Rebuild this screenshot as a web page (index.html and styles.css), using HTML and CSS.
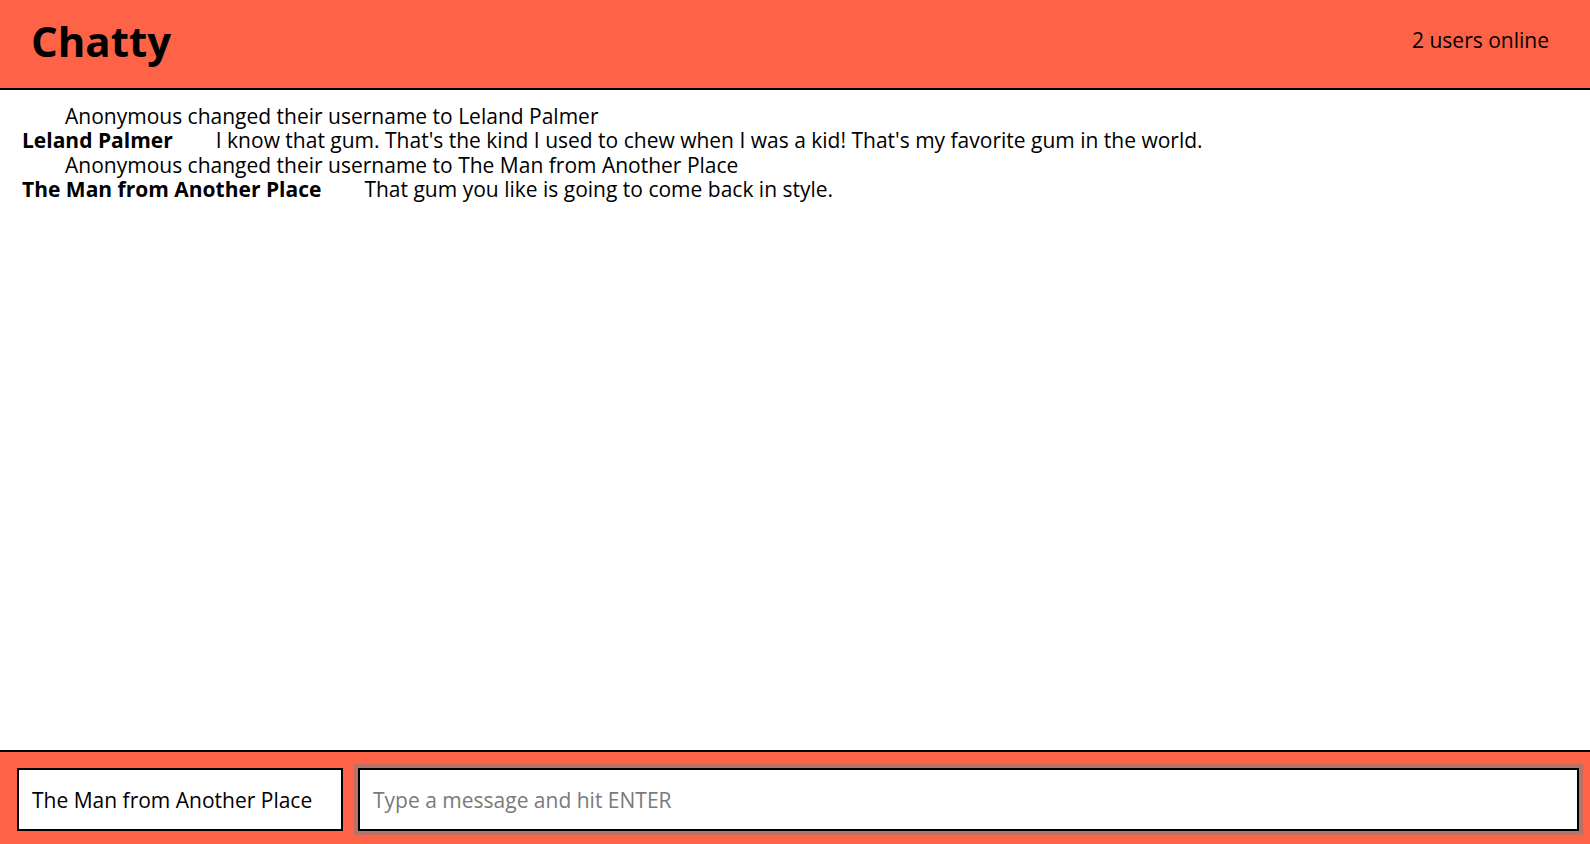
FILE: index.html
```html
<!DOCTYPE html>
<html>
<head>
<meta charset="utf-8">
<title>Chatty</title>
<link rel="stylesheet" href="styles.css">
</head>
<body>
<div class="app">
  <header class="navbar">
    <h1 class="brand">Chatty</h1>
    <span class="online">2 users online</span>
  </header>
  <main class="messages">
    <div class="message system"><span class="username"></span><span class="content">Anonymous changed their username to Leland Palmer</span></div>
    <div class="message"><span class="username">Leland Palmer</span><span class="content">I know that gum. That's the kind I used to chew when I was a kid! That's my favorite gum in the world.</span></div>
    <div class="message system"><span class="username"></span><span class="content">Anonymous changed their username to The Man from Another Place</span></div>
    <div class="message"><span class="username">The Man from Another Place</span><span class="content">That gum you like is going to come back in style.</span></div>
  </main>
  <footer class="chatbar">
    <input class="chatbar-username" type="text" value="The Man from Another Place">
    <input class="chatbar-message" type="text" placeholder="Type a message and hit ENTER">
  </footer>
</div>
</body>
</html>
```
FILE: styles.css
```css
html, body {
  margin: 0;
  padding: 0;
  height: 100%;
}
body {
  font-family: "Open Sans", sans-serif;
  font-size: 21px;
  color: #000;
  background: #fff;
}
.app {
  display: flex;
  flex-direction: column;
  height: 844px;
  overflow: hidden;
}
.navbar {
  flex: none;
  box-sizing: border-box;
  height: 90px;
  background: #ff6347;
  border-bottom: 2px solid #000;
  display: flex;
  justify-content: space-between;
  align-items: flex-start;
  padding: 12px 41px 0 31px;
}
.brand {
  margin: 0;
  font-size: 42px;
  font-weight: 700;
  line-height: normal;
}
.online {
  margin-top: 14px;
  font-size: 21px;
  line-height: normal;
}
.messages {
  flex: 1;
  padding: 14px 22px 0;
  font-size: 21px;
  line-height: 24.3px;
}
.message {
  display: flex;
}
.username {
  font-weight: 700;
}
.content {
  padding-left: 43px;
}
.chatbar {
  flex: none;
  box-sizing: border-box;
  height: 94px;
  background: #ff6347;
  border-top: 2px solid #000;
  display: flex;
  gap: 15px;
  padding: 16px 11px 0 17px;
}
.chatbar input {
  box-sizing: border-box;
  height: 63px;
  margin: 0;
  border: 2px solid #000;
  background: #fff;
  font-family: "Open Sans", sans-serif;
  font-size: 21px;
  color: #000;
  padding: 0 13px;
  outline: none;
}
.chatbar-username {
  width: 326px;
  flex: none;
}
.chatbar-message {
  flex: 1;
  box-shadow: 0 0 1px 4px rgba(128, 128, 128, 0.55);
}
.chatbar-message::placeholder {
  color: #7a7a7a;
}
```
